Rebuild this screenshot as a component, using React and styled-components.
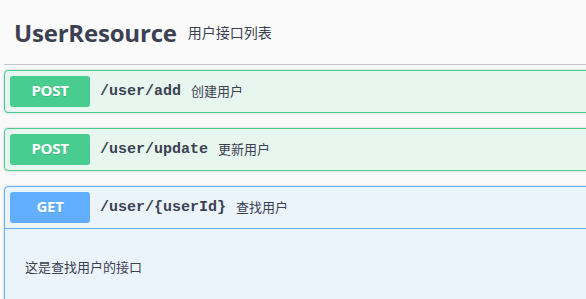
import styled, { createGlobalStyle } from "styled-components";

const Global = createGlobalStyle`
  html, body {
    margin: 0;
    padding: 0;
    background: #fafafa;
    overflow: hidden;
  }
  body {
    font-family: "Open Sans", "Noto Sans CJK SC", sans-serif;
    color: #3b4151;
  }
`;

const METHODS = {
  post: { main: "#49cc90", bg: "#e8f6f0" },
  get: { main: "#61affe", bg: "#ebf3fb" },
};

const ops = [
  { method: "post", path: "/user/add", summary: "创建用户" },
  { method: "post", path: "/user/update", summary: "更新用户" },
  {
    method: "get",
    path: "/user/{userId}",
    summary: "查找用户",
    open: true,
    description: "这是查找用户的接口",
  },
];

export default function App() {
  return (
    <Page>
      <Global />
      <Tag>
        <TagName>UserResource</TagName>
        <TagDesc>用户接口列表</TagDesc>
      </Tag>
      {ops.map((op) => (
        <Block key={op.path} $method={op.method}>
          <Summary $open={op.open} $method={op.method}>
            <Badge $method={op.method}>{op.method.toUpperCase()}</Badge>
            <Path>{op.path}</Path>
            <OpDesc>{op.summary}</OpDesc>
          </Summary>
          {op.open && (
            <Body>
              <p>{op.description}</p>
            </Body>
          )}
        </Block>
      ))}
    </Page>
  );
}

const Page = styled.div`
  width: 640px;
  padding: 0 0 0 4px;
`;

const Tag = styled.div`
  display: flex;
  align-items: center;
  height: 64px;
  padding: 0 20px 0 10px;
  border-bottom: 1px solid rgba(59, 65, 81, 0.3);
  margin-bottom: 5px;
`;

const TagName = styled.h4`
  margin: 0;
  font-size: 24px;
  font-weight: 700;
  color: #3b4151;
  letter-spacing: -0.2px;
`;

const TagDesc = styled.small`
  font-size: 14px;
  padding-left: 11px;
  color: #3b4151;
  font-family: "Noto Sans CJK SC", sans-serif;
`;

const Block = styled.div`
  margin-bottom: 15px;
  border: 1px solid ${(p) => METHODS[p.$method].main};
  border-radius: 4px;
  background: ${(p) => METHODS[p.$method].bg};
  box-shadow: 0 0 3px rgba(0, 0, 0, 0.19);
`;

const Summary = styled.div`
  display: flex;
  align-items: center;
  padding: 5px;
  border-bottom: ${(p) =>
    p.$open ? `1px solid ${METHODS[p.$method].main}` : "none"};
`;

const Badge = styled.span`
  box-sizing: border-box;
  width: 80px;
  height: 31px;
  padding-bottom: 3px;
  display: flex;
  align-items: center;
  justify-content: center;
  border-radius: 3px;
  background: ${(p) => METHODS[p.$method].main};
  color: #fff;
  font-size: 15px;
  font-weight: 700;
  letter-spacing: -0.3px;
  text-shadow: 0 1px 0 rgba(0, 0, 0, 0.1);
`;

const Path = styled.span`
  padding: 0 10px;
  font-family: "Liberation Mono", monospace;
  font-size: 15px;
  font-weight: 700;
  color: #3b4151;
`;

const OpDesc = styled.span`
  font-size: 13px;
  line-height: 16px;
  margin-top: -2px;
  color: #3b4151;
  font-family: "Noto Sans CJK SC", sans-serif;
`;

const Body = styled.div`
  height: 68px;
  padding: 15px 20px;
  p {
    margin: 13px 0 0;
    font-size: 13px;
    font-family: "Noto Sans CJK SC", sans-serif;
    color: #3b4151;
  }
`;
